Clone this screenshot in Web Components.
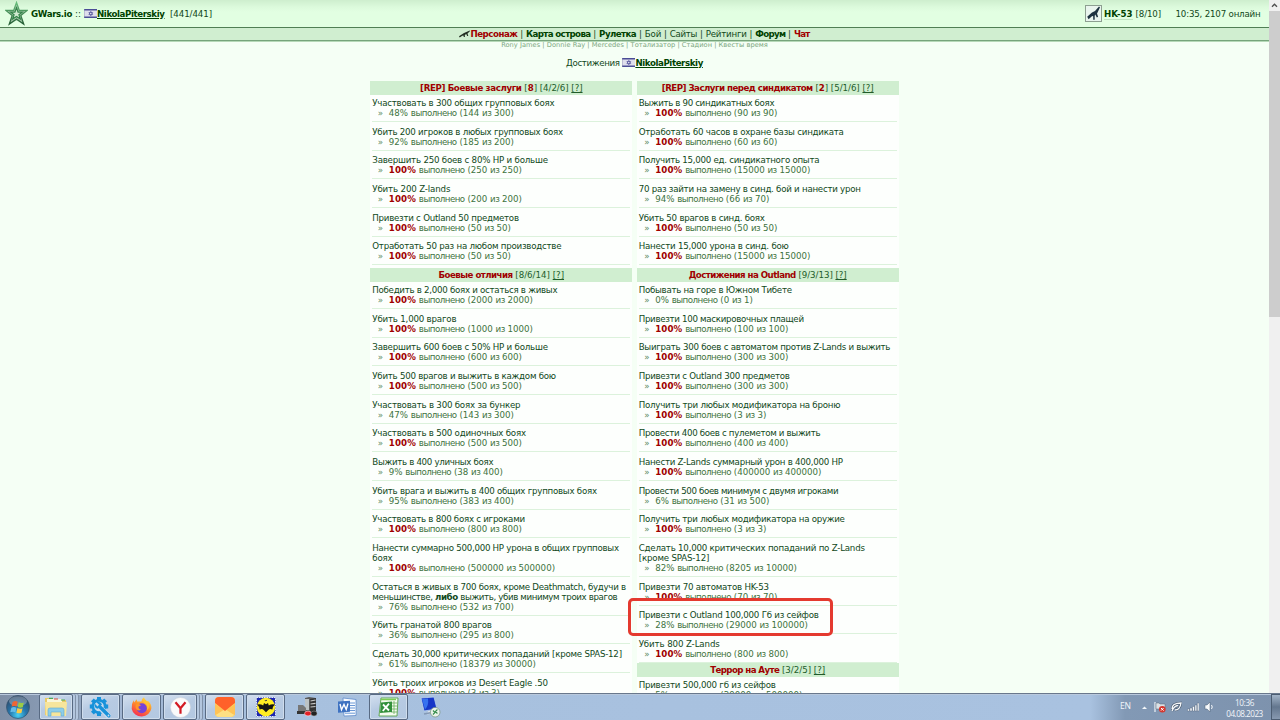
<!DOCTYPE html>
<html lang="ru">
<head>
<meta charset="utf-8">
<title>GWars.io - Достижения</title>
<style>
  html, body {
    margin: 0;
    width: 1280px;
    height: 720px;
    overflow: hidden;
    background: #f5fff5;
    color: #10481a;
    font: 8.67px/10px "DejaVu Sans", Verdana, sans-serif;
  }
  body {
    display: flex;
    flex-direction: column;
  }
</style>
</head>
<body>
<game-page>
  <game-header slot="header"></game-header>
  <game-nav slot="nav"></game-nav>
  <div slot="title"><fit-text w="53.5">Достижения</fit-text> <user-link>NikolaPiterskiy</user-link></div>

  <ach-column slot="columns">
    <ach-group w="101.5" rest="61" count="4/2/6" rep="8" name="[REP] Боевые заслуги">
      <ach-item w="182" pct="48" done="144" total="300">Участвовать в 300 общих групповых боях</ach-item>
      <ach-item w="190.5" pct="92" done="185" total="200">Убить 200 игроков в любых групповых боях</ach-item>
      <ach-item w="175.5" pct="100" done="250" total="250">Завершить 250 боев с 80% HP и больше</ach-item>
      <ach-item w="78" pct="100" done="200" total="200">Убить 200 Z-lands</ach-item>
      <ach-item w="146.5" pct="100" done="50" total="50">Привезти с Outland 50 предметов</ach-item>
      <ach-item w="189" pct="100" done="50" total="50">Отработать 50 раз на любом производстве</ach-item>
    </ach-group>
    <ach-group w="74" rest="51.5" count="8/6/14" name="Боевые отличия">
      <ach-item w="185" pct="100" done="2000" total="2000">Победить в 2,000 боях и остаться в живых</ach-item>
      <ach-item w="84" pct="100" done="1000" total="1000">Убить 1,000 врагов</ach-item>
      <ach-item w="175.5" pct="100" done="600" total="600">Завершить 600 боев с 50% HP и больше</ach-item>
      <ach-item w="183.5" pct="100" done="500" total="500">Убить 500 врагов и выжить в каждом бою</ach-item>
      <ach-item w="148" pct="47" done="143" total="300">Участвовать в 300 боях за бункер</ach-item>
      <ach-item w="153.5" pct="100" done="500" total="500">Участвовать в 500 одиночных боях</ach-item>
      <ach-item w="121" pct="9" done="38" total="400">Выжить в 400 уличных боях</ach-item>
      <ach-item w="224.5" pct="95" done="383" total="400">Убить врага и выжить в 400 общих групповых боях</ach-item>
      <ach-item w="152.5" pct="100" done="800" total="800">Участвовать в 800 боях с игроками</ach-item>
      <ach-item pct="100" done="500000" total="500000"><fit-text w="246.5">Нанести суммарно 500,000 HP урона в общих групповых</fit-text><br><fit-text w="20">боях</fit-text></ach-item>
      <ach-item pct="76" done="532" total="700"><fit-text w="253.5">Остаться в живых в 700 боях, кроме Deathmatch, будучи в</fit-text><br><fit-text w="245">меньшинстве, <b>либо</b> выжить, убив минимум троих врагов</fit-text></ach-item>
      <ach-item w="119.5" pct="36" done="295" total="800">Убить гранатой 800 врагов</ach-item>
      <ach-item w="249.5" pct="61" done="18379" total="30000">Сделать 30,000 критических попаданий [кроме SPAS-12]</ach-item>
      <ach-item w="175.5" pct="100" done="3" total="3">Убить троих игроков из Desert Eagle .50</ach-item>
    </ach-group>
  </ach-column>

  <ach-column slot="columns">
    <ach-group w="151" rest="61" count="5/1/6" rep="2" name="[REP] Заслуги перед синдикатом">
      <ach-item w="135.5" pct="100" done="90" total="90">Выжить в 90 синдикатных боях</ach-item>
      <ach-item w="205" pct="100" done="60" total="60">Отработать 60 часов в охране базы синдиката</ach-item>
      <ach-item w="180.5" pct="100" done="15000" total="15000">Получить 15,000 ед. синдикатного опыта</ach-item>
      <ach-item w="222" pct="94" done="66" total="70">70 раз зайти на замену в синд. бой и нанести урон</ach-item>
      <ach-item w="126" pct="100" done="50" total="50">Убить 50 врагов в синд. боях</ach-item>
      <ach-item w="150" pct="100" done="15000" total="15000">Нанести 15,000 урона в синд. бою</ach-item>
    </ach-group>
    <ach-group w="107" rest="51" count="9/3/13" name="Достижения на Outland">
      <ach-item w="153" pct="0" done="0" total="1">Побывать на горе в Южном Тибете</ach-item>
      <ach-item w="165" pct="100" done="100" total="100">Привезти 100 маскировочных плащей</ach-item>
      <ach-item w="251.5" pct="100" done="300" total="300">Выиграть 300 боев с автоматом против Z-Lands и выжить</ach-item>
      <ach-item w="151" pct="100" done="300" total="300">Привезти с Outland 300 предметов</ach-item>
      <ach-item w="201.5" pct="100" done="3" total="3">Получить три любых модификатора на броню</ach-item>
      <ach-item w="181.5" pct="100" done="400" total="400">Провести 400 боев с пулеметом и выжить</ach-item>
      <ach-item w="204" pct="100" done="400000" total="400000">Нанести Z-Lands суммарный урон в 400,000 HP</ach-item>
      <ach-item w="199.5" pct="6" done="31" total="500">Провести 500 боев минимум с двумя игроками</ach-item>
      <ach-item w="206" pct="100" done="3" total="3">Получить три любых модификатора на оружие</ach-item>
      <ach-item pct="82" done="8205" total="10000"><fit-text w="226">Сделать 10,000 критических попаданий по Z-Lands</fit-text><br><fit-text w="70.5">[кроме SPAS-12]</fit-text></ach-item>
      <ach-item w="130" pct="100" done="70" total="70">Привезти 70 автоматов HK-53</ach-item>
      <ach-item w="180" pct="28" done="29000" total="100000">Привезти с Outland 100,000 Гб из сейфов</ach-item>
      <ach-item w="81" pct="100" done="800" total="800">Убить 800 Z-Lands</ach-item>
    </ach-group>
    <ach-group tight w="69" rest="46" count="3/2/5" name="Террор на Ауте">
      <ach-item w="137" pct="5" done="29000" total="500000">Привезти 500,000 гб из сейфов</ach-item>
    </ach-group>
  </ach-column>
</game-page>
<task-bar></task-bar>
<red-marker></red-marker>

<script>
class BaseElement extends HTMLElement {
  constructor() {
    super();
    this.attachShadow({ mode: "open" });
  }

  connectedCallback() {
    this.shadowRoot.innerHTML = `<style>${this.constructor.styles}</style>${this.markup()}`;
  }
}

// One line of text, tracked so that it is exactly `w` pixels wide
class FitText extends BaseElement {
  static get styles() {
    return /* css */`
      :host { display: inline-block; white-space: pre; vertical-align: baseline; }
    `;
  }

  connectedCallback() {
    super.connectedCallback();
    const target = parseFloat(this.getAttribute("w"));
    if (!target) return;
    const nodes = this.shadowRoot.querySelector("slot").assignedNodes({ flatten: true });
    const length = nodes.map((node) => node.textContent).join("").length;
    const spacing = (target - this.getBoundingClientRect().width) / length;
    this.style.letterSpacing = `${spacing.toFixed(3)}px`;
  }

  markup() {
    return `<slot></slot>`;
  }
}

class UserLink extends BaseElement {
  static get styles() {
    return /* css */`
      :host {
        display: inline-block;
        white-space: nowrap;
        color: #004200;
        font-weight: bold;
      }
      svg { vertical-align: -1px; }
      fit-text { text-decoration: underline; }
    `;
  }

  markup() {
    return /* html */`
    <svg width="13" height="9" viewBox="0 0 13 9">
      <rect width="13" height="9" fill="#dedeec"/>
      <path d="M0 .8h13M0 8.2h13" stroke="#4b4d96" stroke-width="1.5"/>
      <path d="M0 0v9" stroke="#8888ae" stroke-width=".8"/>
      <path d="M6.8 2.3l1.9 3.3H4.9zM6.8 6.8L4.9 3.5h3.8z" fill="none" stroke="#54549c" stroke-width=".7"/>
    </svg><fit-text w="67.5"><slot></slot></fit-text>`;
  }
}

class GameHeader extends BaseElement {
  static get styles() {
    return /* css */`
      :host {
        display: flex;
        align-items: center;
        box-sizing: border-box;
        height: 27px;
        padding: 0 8.5px 0 5px;
        background: linear-gradient(#ceeece, #dcfadc 7px, #e2ffe2 12px);
      }
      .brand { margin-left: 3px; color: #004200; font-weight: bold; }
      .dots { margin: 0 3px; }
      .hp { margin-left: 5.5px; }
      .gun {
        margin-left: auto;
        box-sizing: border-box;
        width: 17px;
        height: 17px;
        border: 1px solid #8d9f91;
        background: #e9f5ee;
      }
      .skill { margin: 1px 3px 0 2px; color: #004200; font-weight: bold; border-bottom: 1px solid #bfe2bf; }
      .online { margin-left: 14.5px; }
      svg { display: block; }
    `;
  }

  markup() {
    return /* html */`
    <svg width="23" height="25" viewBox="0 0 23 25">
      <defs><linearGradient id="s" x2="0" y2="1"><stop stop-color="#65bd79"/><stop offset="1" stop-color="#245d34"/></linearGradient></defs>
      <path d="M11.5 1.5l2.8 7.9h7.7l-6.2 5.1 2.9 8.6-7.2-5-7.2 5 2.9-8.6L1 9.4h7.7z" fill="#a8c9ac" stroke="url(#s)" stroke-width="1.3"/>
      <path d="M11.5 6.8l1.6 4.3h4.2l-3.4 2.7 1.5 4.2-3.9-2.5L7.6 18l1.5-4.2-3.4-2.7h4.2z" fill="#cfe9cf" stroke="#328348" stroke-width="1.2"/>
    </svg>
    <fit-text class="brand" w="41">GWars.io</fit-text><fit-text class="dots" w="6">::</fit-text><user-link>NikolaPiterskiy</user-link>
    <fit-text class="hp" w="42">[441/441]</fit-text>
    <div class="gun"><svg width="15" height="15" viewBox="0 0 15 15">
      <path d="M14 1.3L13 .6 9 5 6 6.6 1.2 10.8l1.4 2.4L6.2 10l1 .3v3.4h1.5V9.8l.5-1.3 1.7 3 1.2-.8-1.1-3.3.8-1.3z" fill="#1d3240"/>
    </svg></div>
    <fit-text class="skill" w="28.5">HK-53</fit-text><fit-text w="25.5">[8/10]</fit-text>
    <fit-text class="online" w="85">10:35, 2107 онлайн</fit-text>`;
  }
}

class GameNav extends BaseElement {
  static get styles() {
    return /* css */`
      :host { display: block; text-align: center; }
      .main {
        display: flex;
        justify-content: center;
        align-items: center;
        height: 12px;
        border-top: 1px solid #507f54;
        border-bottom: 1px solid #76a47b;
        background: #d0eed0;
        box-shadow: 0 1px #b6d9b8;
      }
      i { width: 8.6px; font-style: normal; }
      .bold { color: #004200; font-weight: bold; }
      .hot { color: #a00000; font-weight: bold; }
      .sub {
        height: 8px;
        font-size: 6.67px;
        line-height: 9px;
        color: #7aa67d;
      }
    `;
  }

  markup() {
    return /* html */`
    <div class="main"><svg width="11" height="8" viewBox="0 0 11 8"><path d="M10.8.4L5 3 0 6.3l.7 1.2 2.6-1.7 1.1-.3.4 1.6h1.1L5.8 5l1.4-1 1 2.1 1.1-.2-.8-2.5 2.4-2.2z" fill="#222d22"/></svg><fit-text class="hot" w="47">Персонаж</fit-text>
      <i>|</i><fit-text class="bold" w="64.5">Карта острова</fit-text><i>|</i><fit-text class="bold" w="37">Рулетка</fit-text>
      <i>|</i><fit-text w="16.5">Бой</fit-text><i>|</i><fit-text w="27.3">Сайты</fit-text><i>|</i><fit-text w="41">Рейтинги</fit-text>
      <i>|</i><fit-text class="bold" w="30">Форум</fit-text><i>|</i><fit-text class="hot" w="15.7">Чат</fit-text>
    </div>
    <div class="sub"><fit-text w="266.7">Rony James | Donnie Ray | Mercedes | Тотализатор | Стадион | Квесты время</fit-text></div>`;
  }
}

class AchColumn extends BaseElement {
  static get styles() {
    return /* css */`
      :host { display: block; width: 262px; background: #fdfffd; }
    `;
  }

  markup() {
    return `<slot></slot>`;
  }
}

class AchGroup extends BaseElement {
  static get styles() {
    return /* css */`
      :host { display: block; padding-bottom: 2.6px; }
      header {
        height: 14px;
        margin-bottom: 3.2px;
        line-height: 14px;
        text-align: center;
        color: #225c2a;
        background: #d0eed0;
      }
      b { color: #a00000; }
      :host([tight]) { margin-top: -2.5px; }
      u { text-decoration-thickness: 1px; }
    `;
  }

  markup() {
    const rep = this.getAttribute("rep");
    return /* html */`
    <header><fit-text w="${this.getAttribute("w")}"><b>${this.getAttribute("name")}</b></fit-text><fit-text w="${this.getAttribute("rest")}">${rep ? ` [<b>${rep}</b>]` : ""} [${this.getAttribute("count")}] <u>[?]</u></fit-text></header>
    <slot></slot>`;
  }
}

class AchItem extends BaseElement {
  static get styles() {
    return /* css */`
      :host {
        display: block;
        margin: 0 2px 4.67px;
        padding-bottom: 3px;
        border-bottom: 1px solid #dcf2dc;
        white-space: nowrap;
      }
      :host(:last-of-type) { margin-bottom: 0; }
      .progress { padding-left: 5.5px; color: #3d7340; }
      .progress b { color: #a00000; letter-spacing: .12px; }
      .mark { display: inline-block; width: 11px; color: #5b8a5e; }
      .word { letter-spacing: -.5px; }
    `;
  }

  markup() {
    const pct = this.getAttribute("pct");
    const width = this.getAttribute("w");
    const value = pct === "100" ? `<b>100%</b>` : `${pct}%`;
    const title = width ? `<fit-text w="${width}"><slot></slot></fit-text>` : `<slot></slot>`;
    return /* html */`
    <div>${title}</div>
    <div class="progress"><span class="mark">»</span>${value} <span class="word">выполнено</span> (${this.getAttribute("done")} <span class="word">из</span> ${this.getAttribute("total")})</div>`;
  }
}

class GamePage extends BaseElement {
  static get styles() {
    return /* css */`
      :host { display: flex; height: 693px; overflow: hidden; }
      main { flex: 1; min-width: 0; }
      .title { margin-top: 8.5px; height: 10px; text-align: center; }
      .columns { display: flex; justify-content: center; gap: 4.4px; margin-top: 13.3px; }
      .scroll { width: 11px; display: flex; flex-direction: column; background: #f0f0f0; }
      .arrow { height: 11px; display: block; }
      .thumb { height: 306px; background: #cdcdcd; }
    `;
  }

  markup() {
    return /* html */`
    <main>
      <slot name="header"></slot>
      <slot name="nav"></slot>
      <div class="title"><slot name="title"></slot></div>
      <div class="columns"><slot name="columns"></slot></div>
    </main>
    <div class="scroll">
      <svg class="arrow" width="11" height="11" viewBox="0 0 11 11"><path d="M3 6.7l2.5-2.5L8 6.7" fill="none" stroke="#505050" stroke-width="1.4"/></svg>
      <div class="thumb"></div>
    </div>`;
  }
}

class TaskButton extends BaseElement {
  static get styles() {
    return /* css */`
      :host {
        display: flex;
        justify-content: center;
        align-items: center;
        box-sizing: border-box;
        width: 39px;
        height: 26px;
        margin-right: 2px;
        border: 1px solid transparent;
      }
      :host([open]), :host([stack]) {
        border-color: #586a83;
        border-radius: 2px;
        background: linear-gradient(160deg, #d3e0ef, #b7cae2 45%, #b3c8e1);
        box-shadow: inset 0 0 0 1px #cfdded;
      }
      :host([stack]) {
        width: 34px;
        margin-right: 8px;
        box-shadow: inset 0 0 0 1px #cfdded, 2px 0 #b3c6de, 3px 0 #8192a9, 5px 0 #b3c6de, 6px 0 #8192a9;
      }
    `;
  }

  markup() {
    return `<slot></slot>`;
  }
}

class TaskBar extends BaseElement {
  static get styles() {
    return /* css */`
      :host {
        display: flex;
        align-items: center;
        box-sizing: border-box;
        height: 27px;
        border-top: 1px solid #69788c;
        background: linear-gradient(90deg, #7f8fa6, #8799b2 40px, #a0b5d2 120px, #a7c0de 250px, #a9c2e0 1090px, #8299b5 1125px, #7d92ad);
        box-shadow: inset 0 1px #b9c9dd;
      }
      svg { display: block; }
      .start { margin: 0 9px 0 6px; }
      .tray {
        display: flex;
        align-items: center;
        gap: 5px;
        margin-left: auto;
        color: #f2f6fa;
        font: 8.6px/13px "Open Sans", "Noto Sans", sans-serif;
      }
      .lang { margin: -2px 5px 0 0; }
      .clock { width: 37px; margin: 2px 0 0 6px; font-size: 8.2px; line-height: 11px; text-align: center; }
      .peek { width: 9px; height: 26px; box-sizing: border-box; margin-left: 3px; border: 1px solid #4c5d72; border-right: 0; background: linear-gradient(#a3b4c8, #63768e 50%, #8799b0); }
    `;
  }

  markup() {
    return /* html */`
    <svg class="start" width="24" height="24" viewBox="0 0 24 24">
      <defs><radialGradient id="orb" cx=".5" cy=".85" r=".8"><stop stop-color="#48d2f4"/><stop offset=".45" stop-color="#2777ad"/><stop offset="1" stop-color="#304967"/></radialGradient></defs>
      <circle cx="12" cy="12" r="11.5" fill="url(#orb)" stroke="#37546e" stroke-width=".7"/>
      <ellipse cx="12" cy="6.3" rx="9" ry="5" fill="#fff" opacity=".28"/>
      <path d="M6.6 6.9q2.8-1.5 5.1-.1l-1 4.8q-2.4-1.3-5.1 0z" fill="#ee6635"/>
      <path d="M12.7 7.3q2.6 1.3 5.1.1l-1 4.8q-2.6 1-5.1-.1z" fill="#9bcb45"/>
      <path d="M5.3 12.7q2.7-1.3 5.1 0l-1 4.6q-2.4-1.3-5.1 0z" fill="#65bce9"/>
      <path d="M11.4 13.1q2.5 1.2 5.1.1l-1 4.6q-2.5 1.1-5.1-.1z" fill="#fbca43"/>
    </svg>
    <task-button stack><svg width="24" height="22" viewBox="0 0 24 22">
      <path d="M1 2h7l1 2h13v15H1z" fill="#e9ca68"/><path d="M3 3h15v3H3z" fill="#f9f6da"/>
      <path d="M5 2.3h4M17 4h4" stroke="#4aaa59" stroke-width="1.2"/><path d="M10 3h4" stroke="#d64a3a"/>
      <path d="M1 6h22l-1 14H2z" fill="#f7e59c"/><path d="M4 20v-6q0-2 2-2h12q2 0 2 2v6h-3v-4H7v4z" fill="#8dcde9" stroke="#5ea9d1" stroke-width=".6"/>
    </svg></task-button>
    <task-button open><svg width="23" height="23" viewBox="0 0 23 23">
      <path d="M10 1v19M.8 10.5h18.4M3.4 3.9l13.2 13.2M16.6 3.9L3.4 17.1" stroke="#1792da" stroke-width="4"/>
      <circle cx="10" cy="10.5" r="6.2" fill="#c6daee" stroke="#1792da" stroke-width="2.8"/>
      <path d="M13 13.5l7 7" stroke="#c6daee" stroke-width="5.4"/>
      <path d="M11 11l8.8 8.8" stroke="#1792da" stroke-width="3.4" stroke-linecap="round"/>
      <path d="M7.4 6.2l2.7 2.6-1.6 1.6-2.6-2.7q-1 4.3 3 5.1l4.1-4.2q-1.3-3.7-5.6-2.4z" fill="#1792da"/>
      <circle cx="19.5" cy="19.5" r=".9" fill="#c6daee"/>
    </svg></task-button>
    <task-button open><svg width="21" height="21" viewBox="0 0 21 21">
      <defs><linearGradient id="fx" x1=".8" x2=".3" y2="1"><stop stop-color="#ffe24a"/><stop offset=".45" stop-color="#ff9128"/><stop offset="1" stop-color="#f52c55"/></linearGradient></defs>
      <path d="M13 .3q.4 2.4 3 4l1-.2q3.6 3.1 3.4 7.1A10 9.6 0 0 1 .7 12Q.2 7 2.6 3.2l.5 2.3L5.7 2.3l.5 2.2 4.2.1Q10.7 1.7 13 .3z" fill="url(#fx)"/>
      <circle cx="10.8" cy="11.2" r="5" fill="#7642d8"/>
      <path d="M5 7.2q3-1.1 5 1.2l-2.4 1.2q-.4 2.6 2.3 3-2.6 2-4.7-.6-1.2-2.3-.2-4.8z" fill="#ff9529"/>
      <path d="M12 4.8q5.6 2.5 4 8.2 2.6-1.8 1.8-5.5L14 2.7z" fill="#ffc42f"/>
    </svg></task-button>
    <task-button stack><svg width="21" height="21" viewBox="0 0 21 21">
      <circle cx="10.5" cy="10.5" r="10" fill="#fafafa" stroke="#ced2d8" stroke-width=".5"/>
      <path d="M5.5 5.2l5 6 5-6M10.5 11v5.8" fill="none" stroke="#d31922" stroke-width="2.2"/>
    </svg></task-button>
    <task-button open><svg width="22" height="22" viewBox="0 0 22 22">
      <path d="M1 5q0-4 4-4h12q4 0 4 4v12q0 4-4 4H5q-4 0-4-4z" fill="#ffd465"/>
      <path d="M1 8l10 7L1 19zM21 8l-10 7 10 4z" fill="#ffc256"/><path d="M2 19l9-6 9 6q-2 2-4 2H6q-3 0-4-2z" fill="#ffdf83"/>
      <path d="M1 5q0-4 4-4h12q4 0 4 4v2l-10 8L1 7z" fill="#ff612a"/>
    </svg></task-button>
    <task-button open><svg width="20" height="20" viewBox="0 0 20 20">
      <rect x=".5" y=".5" width="19" height="19" fill="#1d28af" stroke="#e7edf5" stroke-dasharray="1.5 1"/>
      <circle cx="10" cy="10" r="9.2" fill="#ffed23"/>
      <path d="M1.2 7.4q3.4-.8 6 1l.8-2.5 2 1.3 2-1.3.8 2.5q2.6-1.8 6-1-2.2 2-2.4 5.2-2.6-1.5-4.1.5L10 15.3l-2.3-2.2q-1.5-2-4.1-.5Q3.4 9.4 1.2 7.4z" fill="#151515"/><path d="M8.8 3l1 1 1.2-1" fill="none" stroke="#444"/>
    </svg></task-button>
    <task-button><svg width="22" height="22" viewBox="0 0 22 22">
      <path d="M9 2l4-1 7 1v15l-7 2-4-3z" fill="#5b5b5b"/><path d="M14 3l6-1v15l-6 2z" fill="#333"/>
      <path d="M14.5 5l5-1M14.5 8l5-.7M14.5 11l5-.5" stroke="#c8c8c8" stroke-width="1.2"/><path d="M9 3h4v11H9z" fill="#bcc2c4"/>
      <path d="M2 9h5l3 3v6l-8-3z" fill="#777"/><path d="M1 15h9v3H1z" fill="#343434"/>
      <ellipse cx="12" cy="17.5" rx="3.4" ry="2.4" fill="#e21f25" stroke="#fff" stroke-width=".5"/><ellipse cx="18" cy="17.5" rx="3" ry="2.4" fill="#222" stroke="#999" stroke-width=".5"/>
    </svg></task-button>
    <task-button><svg width="21" height="21" viewBox="0 0 21 21">
      <path d="M6 1l13 1.5v16L7 19z" fill="#f8fbff" stroke="#5281c5" stroke-width=".7"/>
      <path d="M12 6h6M12 8.5h6M12 11h6M12 13.5h6M8 16.2h10" stroke="#6a98d6" stroke-width="1"/>
      <path d="M1 4.5l12-.8v11L1 15.7z" fill="#3e72c1"/><path d="M3 7l1.5 5.8L7 7.5l2.2 5 1.8-6" fill="none" stroke="#fff" stroke-width="1.4"/>
    </svg></task-button>
    <task-button open><svg width="22" height="21" viewBox="0 0 22 21">
      <path d="M3 1h17l-1 18H1z" fill="#f4fbef" stroke="#56a149" stroke-width=".9"/>
      <path d="M13 6h6M13 9h6M13 12h6M13 15h6M16 4v13" stroke="#6aaf5e" stroke-width=".8"/>
      <path d="M3 5.5l11-1V15l-12 1z" fill="#32903b"/><path d="M5 7.5l6 6M11 6.7L4.8 14" stroke="#fff" stroke-width="1.8"/>
      <path d="M3 2.5h15" stroke="#7bcf53" stroke-width="1.5"/>
    </svg></task-button>
    <task-button><svg width="22" height="22" viewBox="0 0 22 22">
      <path d="M2 2l13-1 3 12-13 2z" fill="#1636c7" stroke="#b9d0ed" stroke-width=".8"/><path d="M3 3l6-.5q1 7-3 11z" fill="#3671ef"/>
      <path d="M9 15l3-.5 1 3-5 1z" fill="#d7dee6"/><path d="M5 18l8-1.5" stroke="#8499b5" stroke-width="1.5"/>
      <circle cx="16.2" cy="16.2" r="4.8" fill="#e9f2e9" stroke="#79927b" stroke-width=".7"/>
      <path d="M14 14.5l2 2-2 2M18.4 13.5l-2 2 2 2" fill="none" stroke="#348c4a" stroke-width="1.1"/>
    </svg></task-button>
    <div class="tray">
      <fit-text class="lang" w="10.5">EN</fit-text>
      <svg width="7" height="5" viewBox="0 0 7 5"><path d="M1 4l2.5-2.6L6 4z" fill="#f4f7fa"/></svg>
      <svg style="margin-left:1.5px" width="12" height="12" viewBox="0 0 12 12"><path d="M1 1v10" stroke="#eef2f6" stroke-width="1.2"/><path d="M2 2h3l1 1h5v5H2z" fill="#dce2e7" stroke="#5a6876" stroke-width=".5"/><circle cx="8.3" cy="8.3" r="3.3" fill="#d5382f"/><path d="M7 7l2.6 2.6M9.6 7L7 9.6" stroke="#fff"/></svg>
      <svg width="11" height="12" viewBox="0 0 11 12"><path d="M1 8q0-6 9-6-1 7-6 7M1 10q2-5 6-5.5" fill="none" stroke="#405064" stroke-width="2.4"/><path d="M1 8q0-6 9-6-1 7-6 7M1 10q2-5 6-5.5" fill="none" stroke="#f4f7fa" stroke-width="1.4"/></svg>
      <svg width="12" height="10" viewBox="0 0 12 10"><path d="M.5 7h2v2h-2zM3 6h2v3H3zM5.5 4.5h2V9h-2zM8 3h1.8v6H8zM10.3 1H12v8h-1.7z" fill="#f7f9fb" stroke="#4b5d73" stroke-width=".4"/></svg>
      <svg width="11" height="12" viewBox="0 0 11 12"><path d="M1 4h2l3-3v10L3 8H1z" fill="#f7f9fb" stroke="#4b5d73" stroke-width=".5"/><path d="M7.5 4q1.5 2 0 4" fill="none" stroke="#f7f9fb"/></svg>
      <div class="clock"><fit-text w="19">10:36</fit-text><br><fit-text w="36.5">04.08.2023</fit-text></div>
      <div class="peek"></div>
    </div>`;
  }
}

// Hand-drawn frame that lies over the page content
class RedMarker extends BaseElement {
  static get styles() {
    return /* css */`
      :host {
        position: absolute;
        left: 627.5px;
        top: 598px;
        box-sizing: border-box;
        width: 205px;
        height: 38px;
        border: 3px solid #e43a2f;
        border-radius: 5px;
      }
    `;
  }

  markup() {
    return "";
  }
}

customElements.define("user-link", UserLink);
customElements.define("game-header", GameHeader);
customElements.define("game-nav", GameNav);
customElements.define("ach-column", AchColumn);
customElements.define("ach-group", AchGroup);
customElements.define("ach-item", AchItem);
customElements.define("game-page", GamePage);
customElements.define("task-button", TaskButton);
customElements.define("task-bar", TaskBar);
customElements.define("red-marker", RedMarker);
// Last, because it measures text that the elements above lay out
customElements.define("fit-text", FitText);
</script>
</body>
</html>
